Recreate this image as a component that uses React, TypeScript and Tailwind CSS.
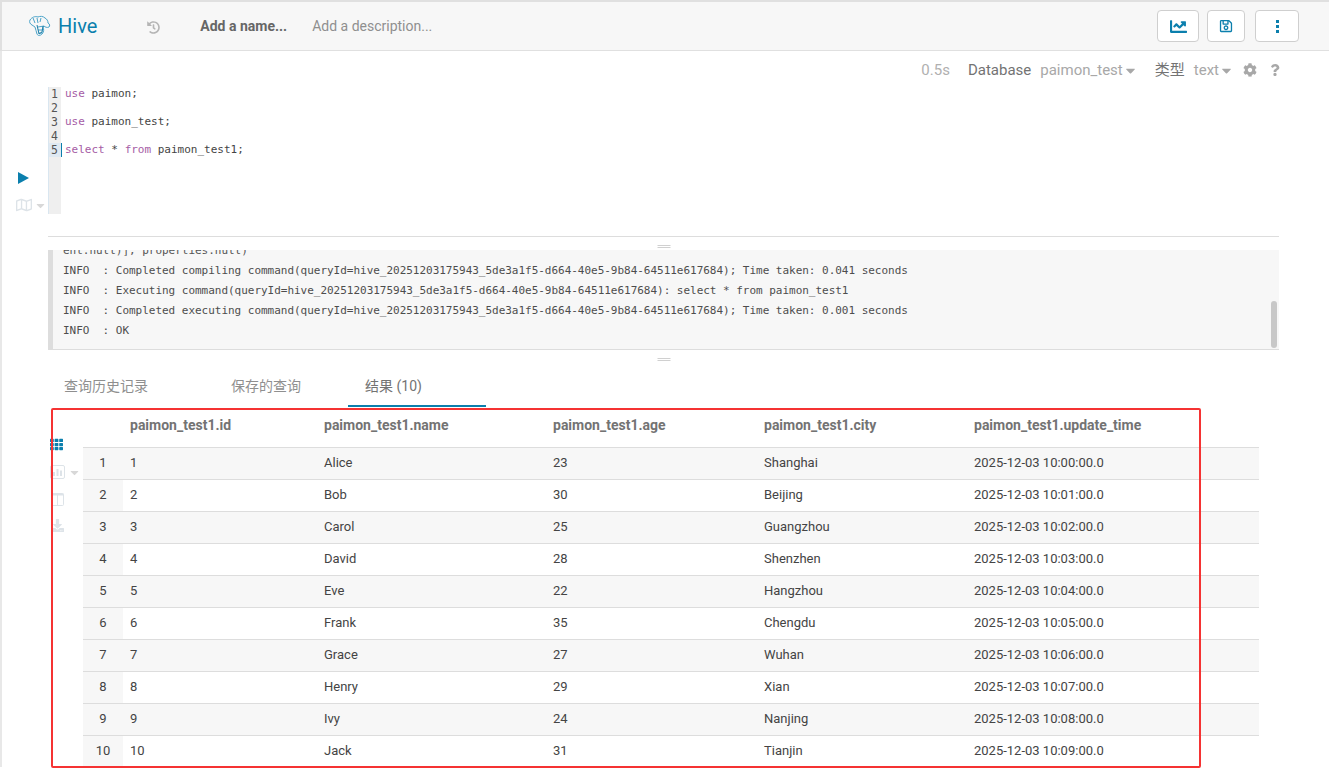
import React from "react";
import { FaCaretDown, FaChartLine, FaCog, FaDownload, FaHistory, FaQuestion, FaRegMap, FaRegSave, FaTh } from "react-icons/fa";

const rows = [
  ["Alice", "23", "Shanghai", "10:00:00.0"],
  ["Bob", "30", "Beijing", "10:01:00.0"],
  ["Carol", "25", "Guangzhou", "10:02:00.0"],
  ["David", "28", "Shenzhen", "10:03:00.0"],
  ["Eve", "22", "Hangzhou", "10:04:00.0"],
  ["Frank", "35", "Chengdu", "10:05:00.0"],
  ["Grace", "27", "Wuhan", "10:06:00.0"],
  ["Henry", "29", "Xian", "10:07:00.0"],
  ["Ivy", "24", "Nanjing", "10:08:00.0"],
  ["Jack", "31", "Tianjin", "10:09:00.0"],
];

function HiveLogo() {
  return (
    <svg width="22" height="22" viewBox="0 0 22 22" fill="none" stroke="#4aa3c9" strokeWidth="1">
      <path d="M1 5c2-3 5-4 8-3 2-1 5-1 7 1 2 1 3 3 3 5 2 1 2 3 1 4-2 1-4 0-5-1l-1 1c1 2 1 5-1 7-2 2-4 2-5 0-1-2-1-5-2-7L3 10C1 9 0 7 1 5z" />
      <path d="M4 3l2 5M8 3l1 5M12 3l-1 4M9 12l6-1M9 15l5 0M10 18l4 0" />
      <path d="M8 10l2 9 3-2 1-6" stroke="#1c7da6" />
    </svg>
  );
}

function PlayIcon() {
  return (
    <svg width="11" height="12" viewBox="0 0 11 12" fill="#0b7fad">
      <path d="M0 0l11 6-11 6z" />
    </svg>
  );
}

function KebabIcon() {
  return (
    <svg width="3" height="13" viewBox="0 0 3 13" fill="#0b7fad">
      <rect width="3" height="3" />
      <rect y="5" width="3" height="3" />
      <rect y="10" width="3" height="3" />
    </svg>
  );
}

function BarChartBoxIcon() {
  return (
    <svg width="15" height="14" viewBox="0 0 15 14" fill="none" stroke="#dde3e8">
      <rect x="0.5" y="0.5" width="14" height="13" rx="1.5" />
      <path d="M4 11V7M7.5 11V4M11 11V5.5" strokeWidth="2" />
    </svg>
  );
}

function ColumnsIcon() {
  return (
    <svg width="13" height="13" viewBox="0 0 13 13" fill="none" stroke="#dde3e8">
      <rect x="0.5" y="0.5" width="12" height="12" rx="1" />
      <path d="M0.5 1.5h12" strokeWidth="2" />
      <path d="M6.5 1v11" />
    </svg>
  );
}

function Code({ kw, text }: { kw?: boolean; text: string }) {
  return <span className={kw ? "text-[#a55ca5]" : "text-[#444444]"}>{text}</span>;
}

export default function App() {
  const mono = { fontFamily: '"DejaVu Sans Mono", monospace' };
  return (
    <div className="relative h-[773px] w-[1329px] overflow-hidden bg-white text-[#444444]" style={{ fontFamily: 'Roboto, "Noto Sans CJK SC", sans-serif' }}>
      <header className="flex h-[51px] items-center border-b border-t-2 border-l-2 border-[#e0e0e0] bg-[#f7f7f7] pl-[27px] pr-[30px]">
        <HiveLogo />
        <span className="ml-[7px] text-[20px] text-[#0b7fad]">Hive</span>
        <FaHistory className="ml-[50px] mt-[2px] text-[13px] text-[#b5b5b5]" />
        <span className="ml-[40px] text-[14px] font-bold text-[#666666]">Add a name...</span>
        <span className="ml-[25px] text-[14px] text-[#8f8f8f]">Add a description...</span>
        <div className="ml-auto flex">
          <button className="flex h-[32px] w-[42px] items-center justify-center rounded-[4px] border border-[#cfcfcf] bg-white text-[17px] text-[#0b7fad]"><FaChartLine /></button>
          <button className="ml-[8px] flex h-[32px] w-[38px] items-center justify-center rounded-[4px] border border-[#cfcfcf] bg-white text-[14px] text-[#0b7fad]"><FaRegSave /></button>
          <button className="ml-[10px] flex h-[32px] w-[44px] items-center justify-center rounded-[4px] border border-[#cfcfcf] bg-white"><KebabIcon /></button>
        </div>
      </header>

      <div className="border-l-2 border-[#e8e8e8]">
        <div className="flex h-[36px] items-center justify-end pr-[48px] pt-[2px] text-[15px] text-[#a8a8a8]">
          <span className="mr-[18px] text-[#b0b0b0]">0.5s</span>
          <span className="mr-[9px] text-[#737373]">Database</span>
          <span>paimon_test</span>
          <FaCaretDown className="text-[15px]" />
          <span className="ml-[17px] mr-[9px] text-[#737373]">类型</span>
          <span>text</span>
          <FaCaretDown className="text-[15px]" />
          <FaCog className="ml-[9px] text-[14px]" />
          <FaQuestion className="ml-[12px] text-[12px]" />
        </div>

        <div className="flex h-[127px] pl-[13px]">
          <div className="flex w-[33px] flex-col items-start pl-[1px] pt-[85px]">
            <div className="ml-[2px]"><PlayIcon /></div>
            <div className="mt-[13px] flex items-center text-[#dde3e8]">
              <FaRegMap className="text-[16px]" />
              <FaCaretDown className="ml-[2px] text-[13px] text-[#d8d8d8]" />
            </div>
          </div>
          <div className="w-[13px] border-l border-[#d9e6f0] bg-[#efefef] text-right text-[11.5px] leading-[14px] text-[#555555]" style={mono}>
            {[1, 2, 3, 4, 5].map((n) => (
              <div key={n} className={n === 5 ? "-mr-px h-[14px] border-r border-[#0b7fad] bg-[#dfe9f2] pr-[3px]" : "h-[14px] pr-[3px]"}>{n}</div>
            ))}
          </div>
          <div className="pl-[4px] text-[11px] leading-[14px]" style={mono}>
            <div className="h-[14px]"><Code kw text="use" /><Code text=" paimon;" /></div>
            <div className="h-[14px]" />
            <div className="h-[14px]"><Code kw text="use" /><Code text=" paimon_test;" /></div>
            <div className="h-[14px]" />
            <div className="h-[14px]"><Code kw text="select" /><Code text=" * " /><Code kw text="from" /><Code text=" paimon_test1;" /></div>
          </div>
        </div>

        <div className="relative ml-[46px] mt-[22px] h-[14px] w-[1231px] border-t border-[#dddddd]">
          <div className="absolute left-1/2 top-[8px] h-[3px] w-[13px] -translate-x-1/2 border-y border-[#d0d0d0]" />
        </div>

        <div className="relative ml-[46px] h-[100px] w-[1231px] overflow-hidden border-b border-l-[5px] border-b-[#dddddd] border-l-[#dddddd] bg-[#f7f7f7] pl-[10px] text-[11px] leading-[20px] tracking-[-0.022px] text-[#4d4d4d]" style={mono}>
          <div className="-mt-[9px] whitespace-pre text-[#555555]">ent.null)], properties.null)</div>
          <div className="whitespace-pre">INFO  : Completed compiling command(queryId=hive_20251203175943_5de3a1f5-d664-40e5-9b84-64511e617684); Time taken: 0.041 seconds</div>
          <div className="whitespace-pre">INFO  : Executing command(queryId=hive_20251203175943_5de3a1f5-d664-40e5-9b84-64511e617684): select * from paimon_test1</div>
          <div className="whitespace-pre">INFO  : Completed executing command(queryId=hive_20251203175943_5de3a1f5-d664-40e5-9b84-64511e617684); Time taken: 0.001 seconds</div>
          <div className="whitespace-pre">INFO  : OK</div>
          <div className="absolute right-[2px] top-[51px] h-[47px] w-[6px] rounded-[3px] bg-[#c8c8c8]" />
        </div>

        <div className="relative ml-[46px] h-[14px] w-[1231px]">
          <div className="absolute left-1/2 top-[8px] h-[3px] w-[13px] -translate-x-1/2 border-y border-[#d0d0d0]" />
        </div>

        <div className="ml-[46px] flex h-[43px] pt-[2px] text-[14px] text-[#8f8f8f]">
          <div className="flex w-[183px] items-center pl-[16px]">查询历史记录</div>
          <div className="flex w-[117px] items-center">保存的查询</div>
          <div className="flex w-[138px] items-center border-b-2 border-[#0b7fad] pl-[17px] pt-[2px] text-[#737373]">结果 (10)</div>
        </div>

        <div className="flex">
          <div className="ml-[46px] flex w-[35px] flex-col items-start pl-[2px] pt-[31px] text-[#dde3e8]">
            <FaTh className="text-[13px] text-[#0b7fad]" />
            <div className="mt-[14px] flex items-center"><BarChartBoxIcon /><FaCaretDown className="ml-[3px] text-[13px] text-[#d8d8d8]" /></div>
            <div className="ml-[1px] mt-[14px]"><ColumnsIcon /></div>
            <FaDownload className="ml-[1px] mt-[13px] text-[13px]" />
          </div>
          <div className="w-[1176px]">
            <div className="flex h-[40px] pt-[2px] text-[14px] font-bold leading-[32px] text-[#737373]">
              <div className="w-[40px]" />
              <div className="w-[194px] pl-[7px]">paimon_test1.id</div>
              <div className="w-[229px] pl-[7px]">paimon_test1.name</div>
              <div className="w-[211px] pl-[7px]">paimon_test1.age</div>
              <div className="w-[210px] pl-[7px]">paimon_test1.city</div>
              <div className="pl-[7px]">paimon_test1.update_time</div>
            </div>
            {rows.map((r, i) => (
              <div key={i} className={`flex h-[32px] border-t border-[#dddddd] text-[13px] text-[#444444] ${i % 2 === 0 ? "bg-[#f7f7f7]" : "bg-white"}`}>
                <div className="flex w-[40px] items-center justify-center bg-[#f7f7f7] pb-[2px]">{i + 1}</div>
                <div className="flex w-[194px] items-center pb-[2px] pl-[7px]">{i + 1}</div>
                <div className="flex w-[229px] items-center pb-[2px] pl-[7px]">{r[0]}</div>
                <div className="flex w-[211px] items-center pb-[2px] pl-[7px]">{r[1]}</div>
                <div className="flex w-[210px] items-center pb-[2px] pl-[7px]">{r[2]}</div>
                <div className="flex items-center pb-[2px] pl-[7px]">2025-12-03 {r[3]}</div>
              </div>
            ))}
          </div>
        </div>
      </div>

      <div className="absolute left-[51px] top-[408px] h-[360px] w-[1150px] rounded-[2px] border-2 border-[#f53333]" />
    </div>
  );
}
